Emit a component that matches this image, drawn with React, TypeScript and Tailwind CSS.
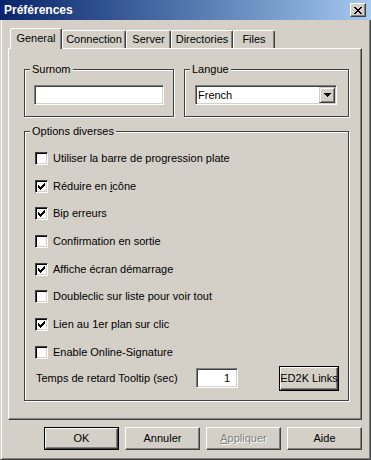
import React from "react";

// Win2000 classic dialog palette
// face #d4d0c8, shadow #808080, dark shadow #404040

function Check() {
  const px: [number, number][] = [
    [6, 0],
    [5, 1], [6, 1],
    [0, 2], [4, 2], [5, 2], [6, 2],
    [0, 3], [1, 3], [3, 3], [4, 3], [5, 3],
    [0, 4], [1, 4], [2, 4], [3, 4], [4, 4],
    [1, 5], [2, 5], [3, 5],
    [2, 6],
  ];
  return (
    <svg width="7" height="7" viewBox="0 0 7 7" shapeRendering="crispEdges">
      {px.map(([x, y], i) => (
        <rect key={i} x={x} y={y} width="1" height="1" fill="#000" />
      ))}
    </svg>
  );
}

function CloseGlyph() {
  const rows = [
    "##....##",
    ".##..##.",
    "..####..",
    "...##...",
    "..####..",
    ".##..##.",
    "##....##",
  ];
  return (
    <svg width="8" height="7" viewBox="0 0 8 7" shapeRendering="crispEdges">
      {rows.flatMap((r, y) =>
        r.split("").map((c, x) =>
          c === "#" ? <rect key={`${x}-${y}`} x={x} y={y} width="1" height="1" fill="#000" /> : null
        )
      )}
    </svg>
  );
}

function DownArrow() {
  return (
    <svg width="7" height="4" viewBox="0 0 7 4" shapeRendering="crispEdges">
      <rect x="0" y="0" width="7" height="1" fill="#000" />
      <rect x="1" y="1" width="5" height="1" fill="#000" />
      <rect x="2" y="2" width="3" height="1" fill="#000" />
      <rect x="3" y="3" width="1" height="1" fill="#000" />
    </svg>
  );
}

function Checkbox({ label, checked }: { label: React.ReactNode; checked?: boolean }) {
  return (
    <div className="flex h-[13px] items-center gap-[5px]">
      <div className="flex h-[13px] w-[13px] shrink-0 items-center justify-center border border-t-[#404040] border-l-[#404040] border-b-white border-r-white bg-white shadow-[inset_1px_1px_0_#000,inset_-1px_-1px_0_#d4d0c8]">
        {checked && <Check />}
      </div>
      <span className="whitespace-nowrap leading-[13px]">{label}</span>
    </div>
  );
}

function GroupBox({
  label,
  className,
  children,
}: {
  label: string;
  className?: string;
  children?: React.ReactNode;
}) {
  return (
    <div
      className={`relative border border-[#404040] shadow-[1px_1px_0_#fff,inset_1px_1px_0_#fff] ${className ?? ""}`}
    >
      <span className="absolute -top-[7px] left-[5px] bg-[#d4d0c8] px-[2px] leading-[13px]">
        {label}
      </span>
      {children}
    </div>
  );
}

function Sunken({ className, children }: { className?: string; children?: React.ReactNode }) {
  return (
    <div
      className={`border border-t-[#808080] border-l-[#808080] border-b-white border-r-white bg-white shadow-[inset_1px_1px_0_#404040,inset_-1px_-1px_0_#d4d0c8] ${className ?? ""}`}
    >
      {children}
    </div>
  );
}

function Button({
  children,
  isDefault,
  disabled,
  className,
}: {
  children: React.ReactNode;
  isDefault?: boolean;
  disabled?: boolean;
  className?: string;
}) {
  const face = (
    <div className="flex h-full w-full items-center justify-center border border-t-white border-l-white border-b-[#404040] border-r-[#404040] bg-[#d4d0c8] shadow-[inset_-1px_-1px_0_#808080]">
      <span
        className={`whitespace-nowrap ${
          disabled ? "text-[#808080] [text-shadow:1px_1px_0_#fff]" : "text-black"
        }`}
      >
        {children}
      </span>
    </div>
  );
  if (isDefault) {
    return <div className={`border border-black ${className ?? ""}`}>{face}</div>;
  }
  return <div className={className}>{face}</div>;
}

function Tab({ label, selected, w }: { label: string; selected?: boolean; w: string }) {
  if (selected) {
    return (
      <div
        className={`relative z-10 -mb-[1px] flex h-[21px] items-start justify-center rounded-tl-[2px] rounded-tr-[2px] border-t border-l border-r border-t-white border-l-white border-r-[#404040] bg-[#d4d0c8] pt-[3px] shadow-[inset_-1px_0_0_#808080] ${w}`}
      >
        {label}
      </div>
    );
  }
  return (
    <div
      className={`flex h-[18px] items-start justify-center rounded-tl-[2px] rounded-tr-[2px] border-t border-l border-r border-t-white border-l-white border-r-[#404040] bg-[#d4d0c8] pt-[2px] shadow-[inset_-1px_0_0_#808080] ${w}`}
    >
      {label}
    </div>
  );
}

const options: { label: React.ReactNode; checked: boolean }[] = [
  { label: "Utiliser la barre de progression plate", checked: false },
  {
    label: (
      <>
        Réduire en <u className="underline-offset-1">i</u>cône
      </>
    ),
    checked: true,
  },
  { label: "Bip erreurs", checked: true },
  { label: "Confirmation en sortie", checked: false },
  { label: "Affiche écran démarrage", checked: true },
  { label: "Doubleclic sur liste pour voir tout", checked: false },
  { label: "Lien au 1er plan sur clic", checked: true },
  { label: "Enable Online-Signature", checked: false },
];

export default function App() {
  return (
    <div className="flex h-[460px] w-[371px] flex-col bg-[#d4d0c8] font-['Liberation_Sans',Arial,sans-serif] text-[11px] leading-[13px] text-black">
      {/* title bar */}
      <div className="flex h-[20px] shrink-0 items-center justify-between bg-linear-to-r from-[#0a246a] to-[#a6caf0] pl-[4px] pr-[5px]">
        <span className="text-[12px] font-bold text-white">Préférences</span>
        <div className="flex h-[14px] w-[16px] items-center justify-center border border-t-white border-l-white border-b-[#404040] border-r-[#404040] bg-[#d4d0c8] shadow-[inset_-1px_-1px_0_#808080]">
          <CloseGlyph />
        </div>
      </div>

      {/* window body */}
      <div className="flex flex-1 flex-col border-b border-l border-r border-b-[#404040] border-l-[#d4d0c8] border-r-[#404040] pb-[9px] pl-[7px] pr-[8px] pt-[8px] shadow-[inset_1px_0_0_#fff,inset_-1px_-1px_0_#808080]">
        {/* tabs */}
        <div className="flex h-[20px] items-end pl-[2px]">
          <Tab label="General" selected w="w-[52px]" />
          <Tab label="Connection" w="w-[64px]" />
          <Tab label="Server" w="w-[45px]" />
          <Tab label="Directories" w="w-[62px]" />
          <Tab label="Files" w="w-[42px]" />
        </div>

        {/* tab page */}
        <div className="h-[372px] border border-b-[#404040] border-l-white border-r-[#404040] border-t-white pl-[15px] pr-[12px] pt-[20px] shadow-[inset_-1px_-1px_0_#808080]">
          <div className="flex gap-[10px]">
            <GroupBox label="Surnom" className="h-[48px] w-[150px] px-[9px] pt-[15px]">
              <Sunken className="h-[20px] w-full" />
            </GroupBox>
            <GroupBox label="Langue" className="h-[48px] flex-1 pl-[10px] pr-[11px] pt-[15px]">
              <Sunken className="flex h-[20px] w-full items-center">
                <span className="flex-1 pl-[2px]">French</span>
                <div className="mr-[1px] flex h-[16px] w-[16px] items-center justify-center border border-t-[#d4d0c8] border-l-[#d4d0c8] border-b-[#404040] border-r-[#404040] bg-[#d4d0c8] shadow-[inset_1px_1px_0_#fff,inset_-1px_-1px_0_#808080]">
                  <DownArrow />
                </div>
              </Sunken>
            </GroupBox>
          </div>

          <GroupBox label="Options diverses" className="mt-[14px] h-[270px] pl-[10px] pr-[9px] pt-[20px]">
            <div className="flex flex-col gap-[14.7px]">
              {options.map((o, i) => (
                <Checkbox key={i} label={o.label} checked={o.checked} />
              ))}
            </div>
            <div className="mt-[7px] flex items-center">
              <span className="flex-1 pl-[1px] pt-[1px]">Temps de retard Tooltip (sec)</span>
              <Sunken className="mr-[41px] flex h-[20px] w-[42px] items-center justify-end pr-[7px]">
                1
              </Sunken>
              <Button isDefault className="h-[25px] w-[60px]">
                ED2K Links
              </Button>
            </div>
          </GroupBox>
        </div>

        {/* dialog buttons */}
        <div className="mt-[7px] flex justify-end gap-[6px]">
          <Button isDefault className="h-[23px] w-[75px]">
            OK
          </Button>
          <Button className="h-[23px] w-[75px]">Annuler</Button>
          <Button disabled className="h-[23px] w-[75px]">
            <u className="underline-offset-1">A</u>ppliquer
          </Button>
          <Button className="h-[23px] w-[75px]">Aide</Button>
        </div>
      </div>
    </div>
  );
}
